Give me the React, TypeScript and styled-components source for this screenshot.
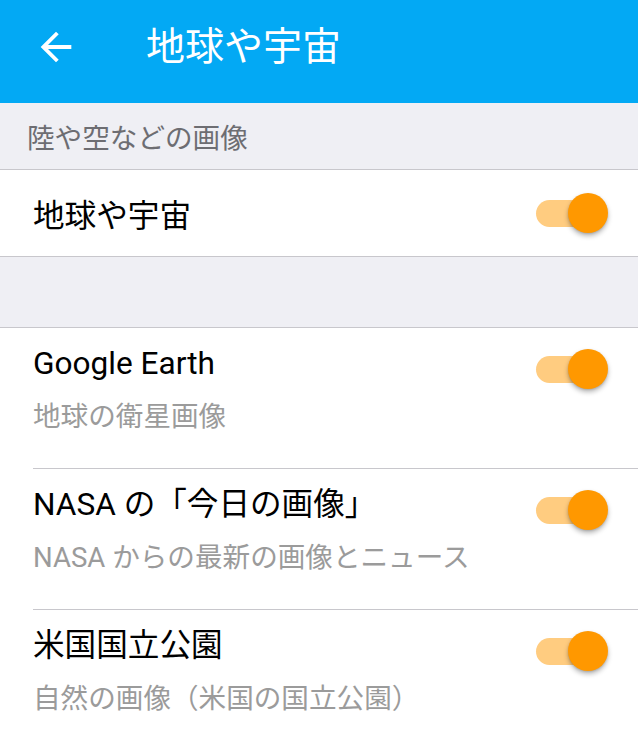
import { FC } from "react";
import styled, { createGlobalStyle } from "styled-components";

const GlobalStyle = createGlobalStyle`
  html, body {
    margin: 0;
    padding: 0;
    background: #ffffff;
  }
  body {
    font-family: Roboto, "Noto Sans CJK JP", sans-serif;
    -webkit-font-smoothing: antialiased;
  }
`;

const Page = styled.div`
  width: 638px;
  min-height: 743px;
  background: #ffffff;
  overflow: hidden;
`;

const Toolbar = styled.header`
  height: 103px;
  background: #03a9f4;
  display: flex;
  align-items: center;
  color: #ffffff;
`;

const BackButton = styled.button`
  width: 46px;
  height: 46px;
  margin-left: 33px;
  margin-top: -10px;
  padding: 0;
  border: none;
  background: transparent;
  display: flex;
  align-items: center;
  justify-content: center;
  color: #ffffff;
`;

const Title = styled.h1`
  margin: -10px 0 0 67px;
  font-size: 39px;
  font-weight: 400;
  line-height: 46px;
`;

const SectionHeader = styled.div<{ $height: number }>`
  height: ${(p) => p.$height}px;
  background: #efeff4;
  border-bottom: 1px solid #c8c7cc;
  display: flex;
  align-items: center;
  padding-left: 27px;
  font-size: 27.6px;
  color: #6d6d72;
`;

const Group = styled.div`
  background: #ffffff;
  border-bottom: 1px solid #c8c7cc;
`;

const SimpleRow = styled.div`
  height: 86px;
  display: flex;
  align-items: center;
  justify-content: space-between;
  padding: 0 30px 0 33px;
  font-size: 31.6px;
  color: #000000;
`;

const List = styled.div`
  background: #ffffff;
`;

const Item = styled.div<{ $last?: boolean }>`
  display: flex;
  justify-content: space-between;
  align-items: flex-start;
  margin-left: 33px;
  padding: 16px 30px 0 0;
  height: ${(p) => (p.$last ? 132 : 124)}px;
  border-bottom: ${(p) => (p.$last ? "none" : "1px solid #c8c7cc")};
`;

const ItemText = styled.div`
  display: flex;
  flex-direction: column;
`;

const ItemTitle = styled.div`
  height: 40px;
  line-height: 40px;
  font-size: 31.6px;
  color: #000000;
  white-space: nowrap;
`;

const ItemSub = styled.div`
  margin-top: 15px;
  height: 36px;
  line-height: 36px;
  font-size: 27.6px;
  color: #9b9b9b;
  white-space: nowrap;
`;

const SwitchWrap = styled.div<{ $offset: number }>`
  position: relative;
  width: 72px;
  height: 40px;
  margin-top: ${(p) => p.$offset}px;
  flex-shrink: 0;
`;

const Track = styled.div`
  position: absolute;
  left: 0;
  top: 6.5px;
  width: 64px;
  height: 27px;
  border-radius: 14px;
  background: #ffcc80;
`;

const Knob = styled.div`
  position: absolute;
  left: 32px;
  top: 0;
  width: 40px;
  height: 40px;
  border-radius: 50%;
  background: #ff9800;
  box-shadow: 0 3px 5px rgba(0, 0, 0, 0.28), 0 1px 2px rgba(0, 0, 0, 0.12);
`;

const Switch: FC<{ offset?: number }> = ({ offset = 0 }) => (
  <SwitchWrap $offset={offset} role="switch" aria-checked="true">
    <Track />
    <Knob />
  </SwitchWrap>
);

const items = [
  { title: "Google Earth", sub: "地球の衛星画像" },
  { title: "NASA の「今日の画像」", sub: "NASA からの最新の画像とニュース" },
  { title: "米国国立公園", sub: "自然の画像（米国の国立公園）" },
];

const App: FC = () => {
  return (
    <Page>
      <GlobalStyle />
      <Toolbar>
        <BackButton aria-label="戻る">
          <svg width="46" height="46" viewBox="0 0 24 24" fill="currentColor">
            <path d="M20 11H7.83l5.59-5.59L12 4l-8 8 8 8 1.41-1.41L7.83 13H20v-2z" />
          </svg>
        </BackButton>
        <Title>地球や宇宙</Title>
      </Toolbar>

      <SectionHeader $height={66}>陸や空などの画像</SectionHeader>
      <Group>
        <SimpleRow>
          <span>地球や宇宙</span>
          <Switch />
        </SimpleRow>
      </Group>

      <SectionHeader $height={70} />

      <List>
        {items.map((item, i) => (
          <Item key={item.title} $last={i === items.length - 1}>
            <ItemText>
              <ItemTitle>{item.title}</ItemTitle>
              <ItemSub>{item.sub}</ItemSub>
            </ItemText>
            <Switch offset={5} />
          </Item>
        ))}
      </List>
    </Page>
  );
};

export default App;
